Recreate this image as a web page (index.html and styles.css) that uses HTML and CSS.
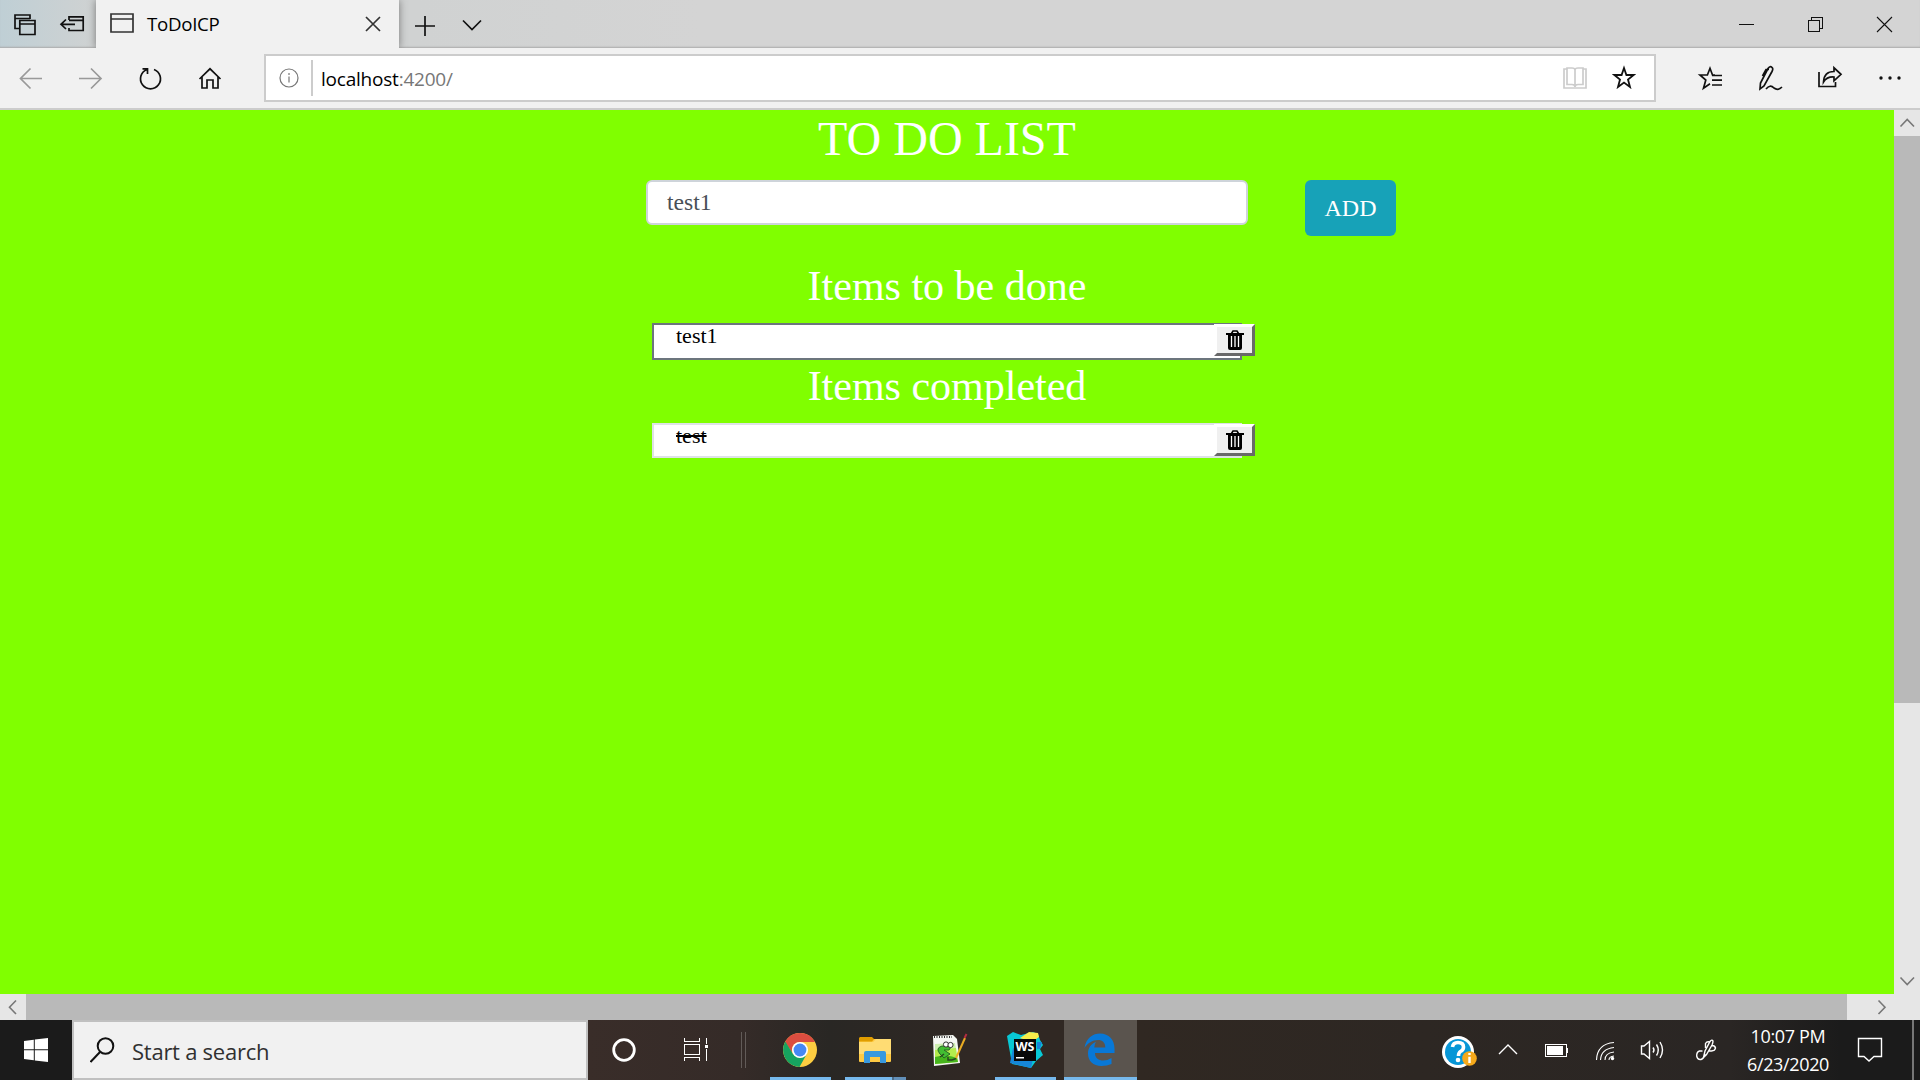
FILE: index.html
```
<!DOCTYPE html>
<html lang="en">
<head>
<meta charset="utf-8">
<title>ToDoICP</title>
<link rel="stylesheet" href="styles.css">
</head>
<body>
<div class="screen">
  <header class="titlebar">
    <svg class="tab-tools" width="96" height="48" viewBox="0 0 96 48"><path d="M19 28.500H15V15H30V19M15 18.500H30M19.800 20.500H35V34.500H19.800ZM20 24H35"/><path d="M69 20V16.800H83.200V30.500H69V28M69 20.300H83M61 24.300H75M66 19.500L61 24.300L66 29"/></svg>
    <div class="tab">
      <svg width="24" height="20" viewBox="0 0 24 20"><path d="M1 1H23V19H1ZM1 6H23"/></svg>
      <span class="tab-title">ToDoICP</span>
      <svg class="tab-close" width="16" height="16" viewBox="0 0 16 16"><path d="M1 1L15 15M15 1L1 15"/></svg>
    </div>
    <svg width="100" height="48" viewBox="0 0 100 48"><path d="M16 26H36M26 16V36M64 20.500L73 29.500L82 20.500"/></svg>
    <div class="window-buttons">
      <svg width="69" height="48" viewBox="0 0 69 48"><path class="crisp" d="M27 24.500H42"/></svg>
      <svg width="69" height="48" viewBox="0 0 69 48"><path class="crisp" d="M27.500 20.500H38.500V31.500H27.500ZM30.500 20V17.500H41.500V28.500H39"/></svg>
      <svg width="70" height="48" viewBox="0 0 70 48"><path class="thin" d="M27 17L42 32M42 17L27 32"/></svg>
    </div>
  </header>

  <nav class="toolbar">
    <svg class="muted" width="60" height="60" viewBox="0 0 60 60"><path d="M42 30.500H20.500M30.500 20.500L20.500 30.500L30.500 40.500"/></svg>
    <svg class="muted" width="60" height="60" viewBox="0 0 60 60"><path d="M19 30.500H41M31 20.500L41 30.500L31 40.500"/></svg>
    <svg width="60" height="60" viewBox="0 0 60 60"><path d="M27 21.500A10 10 0 1 0 34 21.500M22.500 20.800H27.500V26"/></svg>
    <svg width="60" height="60" viewBox="0 0 60 60"><path d="M19.500 31L30 20.800L40.500 31M22 29V40H27V32H33V40H38V29"/></svg>
    <div class="address">
      <svg class="info" width="20" height="20" viewBox="0 0 20 20"><circle cx="10" cy="10" r="9"/><path d="M10 8.500V14.500M10 5V7"/></svg>
      <span class="url"><b>localhost</b>:4200/</span>
      <svg class="book" width="24" height="24" viewBox="0 0 24 24"><path d="M4 3H1V22H23V3H20M4 2H9Q12 2 12 4Q12 2 15 2H20V18.500H15Q12 18.500 12 21Q12 18.500 9 18.500H4ZM12 4V21"/></svg>
      <svg class="star" width="24" height="24" viewBox="0 0 24 24"><path d="M12 3L14.400 10H21.600L16 14.500L18 22L12 17.600L6 22L8 14.500L2.400 10H9.600Z"/></svg>
    </div>
    <svg width="60" height="60" viewBox="0 0 60 60"><path d="M35 27H32.500L30 20.300L27.400 27H20L25.800 32L23.500 40.200L30 35.800M32 27.500H42M32 32.200H42M32 37H42"/></svg>
    <svg width="60" height="60" viewBox="0 0 60 60"><path d="M20 41L20.500 35L28 20.500Q30 17.500 32 19.500Q33.500 20.500 32 23.500L24 38ZM22.500 28L26 21.500H29M26 41Q30 36 34 40Q38 43 42 39"/></svg>
    <svg width="60" height="60" viewBox="0 0 60 60"><path d="M19 24V38.500H35.500V34M23.500 34Q24 23.500 34 23.500V19.800L41 26.300L34 32.800V29Q27 28.500 23.500 34Z"/></svg>
    <svg width="60" height="60" viewBox="0 0 60 60"><g class="solid"><circle cx="21" cy="30" r="1.700"/><circle cx="30" cy="30" r="1.700"/><circle cx="39" cy="30" r="1.700"/></g></svg>
  </nav>

  <div class="viewport">
    <main class="page">
      <h1>TO DO LIST</h1>
      <form class="entry">
        <span class="entry-field">test1</span>
        <button class="add" type="button">ADD</button>
      </form>
      <h2>Items to be done</h2>
      <div class="item pending"><span>test1</span>
        <button class="delete" type="button"><svg width="18" height="20" viewBox="0 0 18 20"><use href="#trash"/></svg></button></div>
      <h2 class="second">Items completed</h2>
      <div class="item completed"><span><s>test</s></span>
        <button class="delete" type="button"><svg width="18" height="20" viewBox="0 0 18 20"><use href="#trash"/></svg></button></div>
    </main>
    <div class="vscroll">
      <svg width="26" height="26" viewBox="0 0 26 26"><path d="M6.500 16.500L13.200 9.500L20 16.500"/></svg>
      <div class="vthumb"></div>
      <svg class="down" width="26" height="26" viewBox="0 0 26 26"><path d="M6.500 9.500L13.200 16.500L20 9.500"/></svg>
    </div>
  </div>
  <div class="hscroll">
    <svg width="26" height="26" viewBox="0 0 26 26"><path d="M16 6.500L9.500 13.200L16 20"/></svg>
    <div class="hthumb"></div>
    <svg class="right" width="26" height="26" viewBox="0 0 26 26"><path d="M10.500 6.500L17 13.200L10.500 20"/></svg>
  </div>

  <footer class="taskbar">
    <svg class="start" width="72" height="60" viewBox="0 0 72 60"><path fill="#fff" d="M24 21L33.800 19.800V29.200H24ZM34.800 19.600L48 18V29.200H34.800ZM24 30.200H33.800V40.200L24 39ZM34.800 30.200H48V42L34.800 40.400Z"/></svg>
    <div class="search">
      <svg width="26" height="26" viewBox="0 0 26 26"><circle cx="15.500" cy="9" r="7.800"/><path d="M10 15L0.500 25"/></svg>
      <span>Start a search</span>
    </div>
    <svg class="cell" width="72" height="60" viewBox="0 0 72 60"><circle cx="36" cy="30" r="10.300" fill="none" stroke="#fff" stroke-width="2.800"/></svg>
    <svg class="cell" width="72" height="60" viewBox="0 0 72 60"><path class="crisp line" d="M24.500 18V21.500H39.500V18M24.500 24.500H39.500V34.500H24.500ZM24.500 41V37.500H39.500V41M46.500 18V24M46.500 29V41"/><path fill="#fff" d="M45 25H48V28H45Z"/></svg>
    <svg width="31" height="60" viewBox="0 0 31 60"><path class="crisp" stroke="#625b58" d="M9.500 12V48M13.500 12V48"/></svg>

    <svg class="app" width="75" height="60" viewBox="0 0 75 60"><circle cx="37" cy="30" r="17" fill="#fdcd41"/><path fill="#db4d40" d="M22 22A17 17 0 0 1 52 22H37A8 8 0 0 0 30 34Z"/><path fill="#16a35f" d="M22.300 21.600A17 17 0 0 0 36.500 47L43.500 34.500Q37 41 30 34Z"/><circle cx="37" cy="30" r="8" fill="#fff"/><circle cx="37" cy="30" r="6.400" fill="#4688f4"/><path fill="#76b9ed" d="M7 57H68V60H7Z"/></svg>
    <svg class="app" width="75" height="60" viewBox="0 0 75 60"><rect x="21" y="19" width="32" height="23" rx="1" fill="#ffca43"/><path fill="#ffdc73" d="M21 22H35L38 19H53V34H21Z"/><path fill="#e09d00" d="M22 17H34L36 19L34 21.500H21V18Z"/><path fill="#3999de" d="M28 31H46Q48 31 48 33V43H42V37H32V43H26V33Q26 31 28 31Z"/><path fill="#76b9ed" d="M7 57H54V60H7Z"/><path fill="#4e6c87" d="M54 57H56V60H54Z"/><path fill="#6290b9" d="M56 57H68V60H56Z"/></svg>
    <svg class="app" width="75" height="60" viewBox="0 0 75 60"><path fill="#f5f7f3" d="M20 16L40 15L44 19L47 43L21 46Z"/><path fill="#cdeeb0" d="M22 24L42 23L43 29L22 30Z"/><path fill="#b4ec4d" d="M22 30L43 28L45 42L22 44Z"/><path fill="#47b51d" d="M22 37Q34 34 44 38L45 42L22 44Z"/><path fill="none" stroke="#333" stroke-width="2" stroke-dasharray="1 1.500" d="M21 17H39"/><path fill="#42bd32" stroke="#266725" d="M27 34Q22 28 29 26L38 27L36 30H31L37 34L31 38L27 34"/><circle cx="33" cy="24.500" r="2.600" fill="#fff" stroke="#333"/><circle cx="37.500" cy="25" r="2.600" fill="#fff" stroke="#333"/><path d="M35 37V40H39M39 40L43 38.500M27 37L31 34" stroke="#284620" stroke-width="1.500" fill="none"/><path stroke="#e9ab23" stroke-width="2" d="M43 38L52 18"/><path stroke="#b42d40" stroke-width="2" d="M51.500 18L53.500 14"/></svg>
    <svg class="app" width="75" height="60" viewBox="0 0 75 60"><path fill="#08c8d5" d="M19 16L25 12L33 15L45 12L50 14L52 20L55 25L52 29L55 35L48 41L43 48L24 44Z"/><path fill="#1686d8" d="M25 28L22 43L43 48L45 39Z"/><path fill="#f7ed4a" d="M32 18L41 12L50 13L51 17L44 22Z"/><path fill="#1686d8" d="M49 22H54L52 29H49Z"/><rect x="26" y="19" width="22" height="22" fill="#080808"/><text x="27.500" y="31" class="ws-text" textLength="19" lengthAdjust="spacingAndGlyphs">WS</text><path fill="#fff" d="M28 37H36V38.500H28Z"/><path fill="#76b9ed" d="M7 57H68V60H7Z"/></svg>
    <svg class="app current" width="73" height="60" viewBox="0 0 73 60"><path fill="#0878d7" d="M20.500 28C22 18 29 13.500 36 13.500C45 13.500 50.500 20 50.500 28.500V33H31C31 38.500 35 40.500 39 40.500Q43.500 40.500 47.500 38V44Q43 46 37.500 46C29 46 24 41 24 33.500C24 28 27 24 32 21.800Q30.500 24 30.300 27.500H41.300C41.300 22.500 38.500 20 34 20C28.500 20 23.500 23 20.500 28Z"/><path fill="#76b9ed" d="M0 57H73V60H0Z"/></svg>

    <div class="tray">
      <svg width="54" height="60" viewBox="0 0 54 60"><circle cx="28" cy="32" r="16" fill="#fff"/><circle cx="28" cy="32" r="13" fill="#0696d7"/><path fill="none" stroke="#fff" stroke-width="3.600" d="M22.500 27Q23 22.500 28 22.500Q33.500 22.500 33.500 27Q33.500 30 30.500 31.500Q28.500 32.700 28.500 36"/><circle cx="28" cy="40" r="2.300" fill="#fff"/><circle cx="39.500" cy="38.500" r="7.300" fill="#f5a91b"/><path d="M39.500 36.800V43M39.500 33V35" stroke="#fff" stroke-width="2.400"/></svg>
      <svg width="48" height="60" viewBox="0 0 48 60"><path class="line" d="M15 34L24 25L33 34"/></svg>
      <svg width="48" height="60" viewBox="0 0 48 60"><path class="line crisp" d="M13.500 24.500H34.500V36.500H13.500ZM35.500 28V33"/><path fill="#fff" d="M15 26H31V35H15Z"/></svg>
      <svg width="48" height="60" viewBox="0 0 48 60"><g class="line thinline"><path d="M16.500 40Q17 24 34 22.500"/><path d="M20.500 40Q21 29 34 27.500"/><path d="M25 40Q25 33 34 32"/><path d="M29 40Q29 36.500 34 36"/></g><circle cx="32.500" cy="38.500" r="1.700" fill="#fff"/></svg>
      <svg width="50" height="60" viewBox="0 0 50 60"><path class="line" d="M13.500 26H16L21.500 21.500V38.500L16 34H13.500ZM25 27.500Q27 30 25 32.500M28.500 24.500Q32 30 28.500 35.500M32 22Q37 30 32 38"/></svg>
      <svg width="56" height="60" viewBox="0 0 56 60"><path class="line" d="M24.500 31H21.500Q18.500 32 18.700 36Q19.500 40 23 39.500Q26 38.500 27 34M25.500 37.500L27 31L32 21.500Q34 19 35 21Q35 23 34 25L28.500 34.500ZM27.500 28V23.500Q29 21 31.500 22M34 25.500Q37 25.500 37.500 28Q37 31 33.500 31H31"/></svg>
      <div class="clock"><span>10:07 PM</span><span>6/23/2020</span></div>
      <svg class="action" width="69" height="60" viewBox="0 0 69 60"><path class="line" d="M15.500 18.500H38.500V36.500H31L26 41L21 36.500H15.500Z"/></svg>
      <div class="show-desktop"></div>
    </div>
  </footer>
</div>
<svg width="0" height="0" class="symbols"><defs><g id="trash"><path fill="none" stroke="#000" stroke-width="1.600" d="M5.500 3.500L7 1H11L12.500 3.500"/><path d="M0 3H18V5H16V18Q16 20 14 20H4Q2 20 2 18V5H0Z"/><path stroke="#fff" stroke-width="1.300" d="M5.500 6V17M9 6V17M12.500 6V17"/></g></defs></svg>
</body>
</html>
```
FILE: styles.css
```
* { box-sizing: border-box; }
body { margin: 0; overflow: hidden; font-family: "Open Sans", "Noto Sans", sans-serif; }
svg { display: block; flex: none; }
.symbols { display: none; }
.screen { width: 1920px; height: 1080px; display: flex; flex-direction: column; }

.titlebar { height: 48px; display: flex; background: linear-gradient(90deg, #bfcfd5 0, #d0d2d2 100px, #d0d2d2 420px, #d4d4d4 700px, #d4d4d4 100%); box-shadow: inset 0 -2px 2px -1px #aaa; }
.titlebar svg, .toolbar svg { fill: none; stroke: #111; stroke-width: 1.7; }
.titlebar .crisp { shape-rendering: crispEdges; stroke-width: 1; }
.crisp { shape-rendering: crispEdges; stroke-width: 1; fill: none; }
.thin { stroke-width: 1.1; }
.tab { width: 303px; height: 48px; padding: 0 18px 0 14px; display: flex; align-items: center; background: #f1f1f1; box-shadow: 0 0 8px #777; clip-path: inset(0 -10px 0 -10px); }
.tab svg { stroke: #333; margin-bottom: 2px; }
.tab-title { margin: 0 0 7px 13px; font-size: 18.7px; line-height: 24px; letter-spacing: -0.3px; transform: translateY(3px); }
.tab .tab-close { margin: 0 0 0 auto; }
.window-buttons { display: flex; margin-left: auto; }

.toolbar { height: 62px; display: flex; align-items: flex-start; background: #f1f1f1; border-bottom: 2px solid #ccc; }
.toolbar .muted { stroke: #999; }
.toolbar .solid { fill: #111; stroke: none; }
.address { width: 1392px; height: 48px; margin: 6px 24px 0; padding: 0 18px 0 13px; display: flex; align-items: center; background: #fff; border: 2px solid #ccc; }
.toolbar .info { stroke: #777; stroke-width: 1.2; }
.url { height: 36px; margin-left: 12px; padding-left: 8px; border-left: 2px solid #ccc; line-height: 38px; font-size: 19px; letter-spacing: -0.22px; color: #777; }
.url b { font-weight: 400; color: #000; }
.toolbar .book { margin-left: auto; stroke: #ccc; }
.toolbar .star { margin: 0 0 2px 25px; stroke-width: 1.8; }

.viewport { height: 884px; display: flex; }
.page { width: 1894px; background: #80ff00; font-family: "Liberation Serif", serif; color: #fff; }
h1, h2 { margin: 0; font-weight: 400; text-align: center; }
h1 { height: 70px; font-size: 48px; line-height: 58px; }
h2 { height: 61px; margin-top: 26px; font-size: 42px; line-height: 49px; }
.entry { display: flex; align-items: flex-start; height: 56px; padding-left: 646px; margin: 0; }
.entry-field { width: 602px; height: 45px; padding-left: 19px; border: 2px solid #ced4da; border-radius: 6px; background: #fff; color: #495057; font-size: 23.6px; line-height: 41px; }
.add { width: 91px; height: 56px; margin-left: 57px; border: 0; border-radius: 6px; background: #17a2b8; color: #fff; font: 24px "Liberation Serif", serif; }
.item { width: 590px; height: 37px; margin-left: 652px; display: flex; background: #fff; border: 2px solid #6c757d; color: #000; font-size: 22px; line-height: 21px; }
.item > span { padding-left: 22px; }
.item.completed { height: 35px; border-color: #dee2e6; }
.completed s { text-decoration-thickness: 2px; text-decoration-skip-ink: none; }
.delete { width: 41px; height: 32px; margin: -1px -15px 0 auto; padding: 0; display: flex; align-items: center; justify-content: center; border: 3px solid; border-color: #fff #696969 #696969 #fff; background: #f0f0f0; }
h2.second { margin-top: 2px; }

.vscroll { width: 26px; display: flex; flex-direction: column; background: #e6e6e6; }
.vscroll svg, .hscroll svg { fill: none; stroke: #777; stroke-width: 1.6; }
.vthumb { height: 567px; background: #b9b9b9; }
.down { margin-top: auto; }
.hscroll { height: 26px; display: flex; background: #e6e6e6; }
.hthumb { width: 1821px; background: #b9b9b9; }
.right { margin-left: auto; margin-right: 26px; }

.taskbar { height: 60px; display: flex; color: #fff; background: linear-gradient(90deg, #1b1b1b 0, #1b1b1b 72px, #392d29 588px, #352b28 740px, #292724 830px, #302824 970px, #302822 1140px, #2d2723 1420px, #2a2624 1730px, #1b1b1b 1840px, #1b1b1b 100%); }
.search { width: 516px; height: 60px; padding-left: 16px; display: flex; align-items: center; background: #f1f1f1; border: 2px solid #c0c0c0; color: #303030; font-size: 22px; letter-spacing: -0.25px; }
.search svg { fill: none; stroke: #111; stroke-width: 2; }
.search span { margin-left: 16px; padding-top: 1px; }
.line { fill: none; stroke: #fff; stroke-width: 1.4; }
.thinline { stroke-width: 1.1; }
.crisp.line { stroke-width: 1; }
.current { margin-left: 1px; background: #5a544e; }
.ws-text { font: bold 13px "Open Sans", sans-serif; fill: #fff; }
.tray { margin-left: auto; display: flex; }
.clock { width: 109px; padding: 2px 1px 0 0; display: flex; flex-direction: column; align-items: center; font-size: 18px; line-height: 28px; letter-spacing: -0.35px; }
.show-desktop { width: 8px; border-left: 2px solid #777; }
```
